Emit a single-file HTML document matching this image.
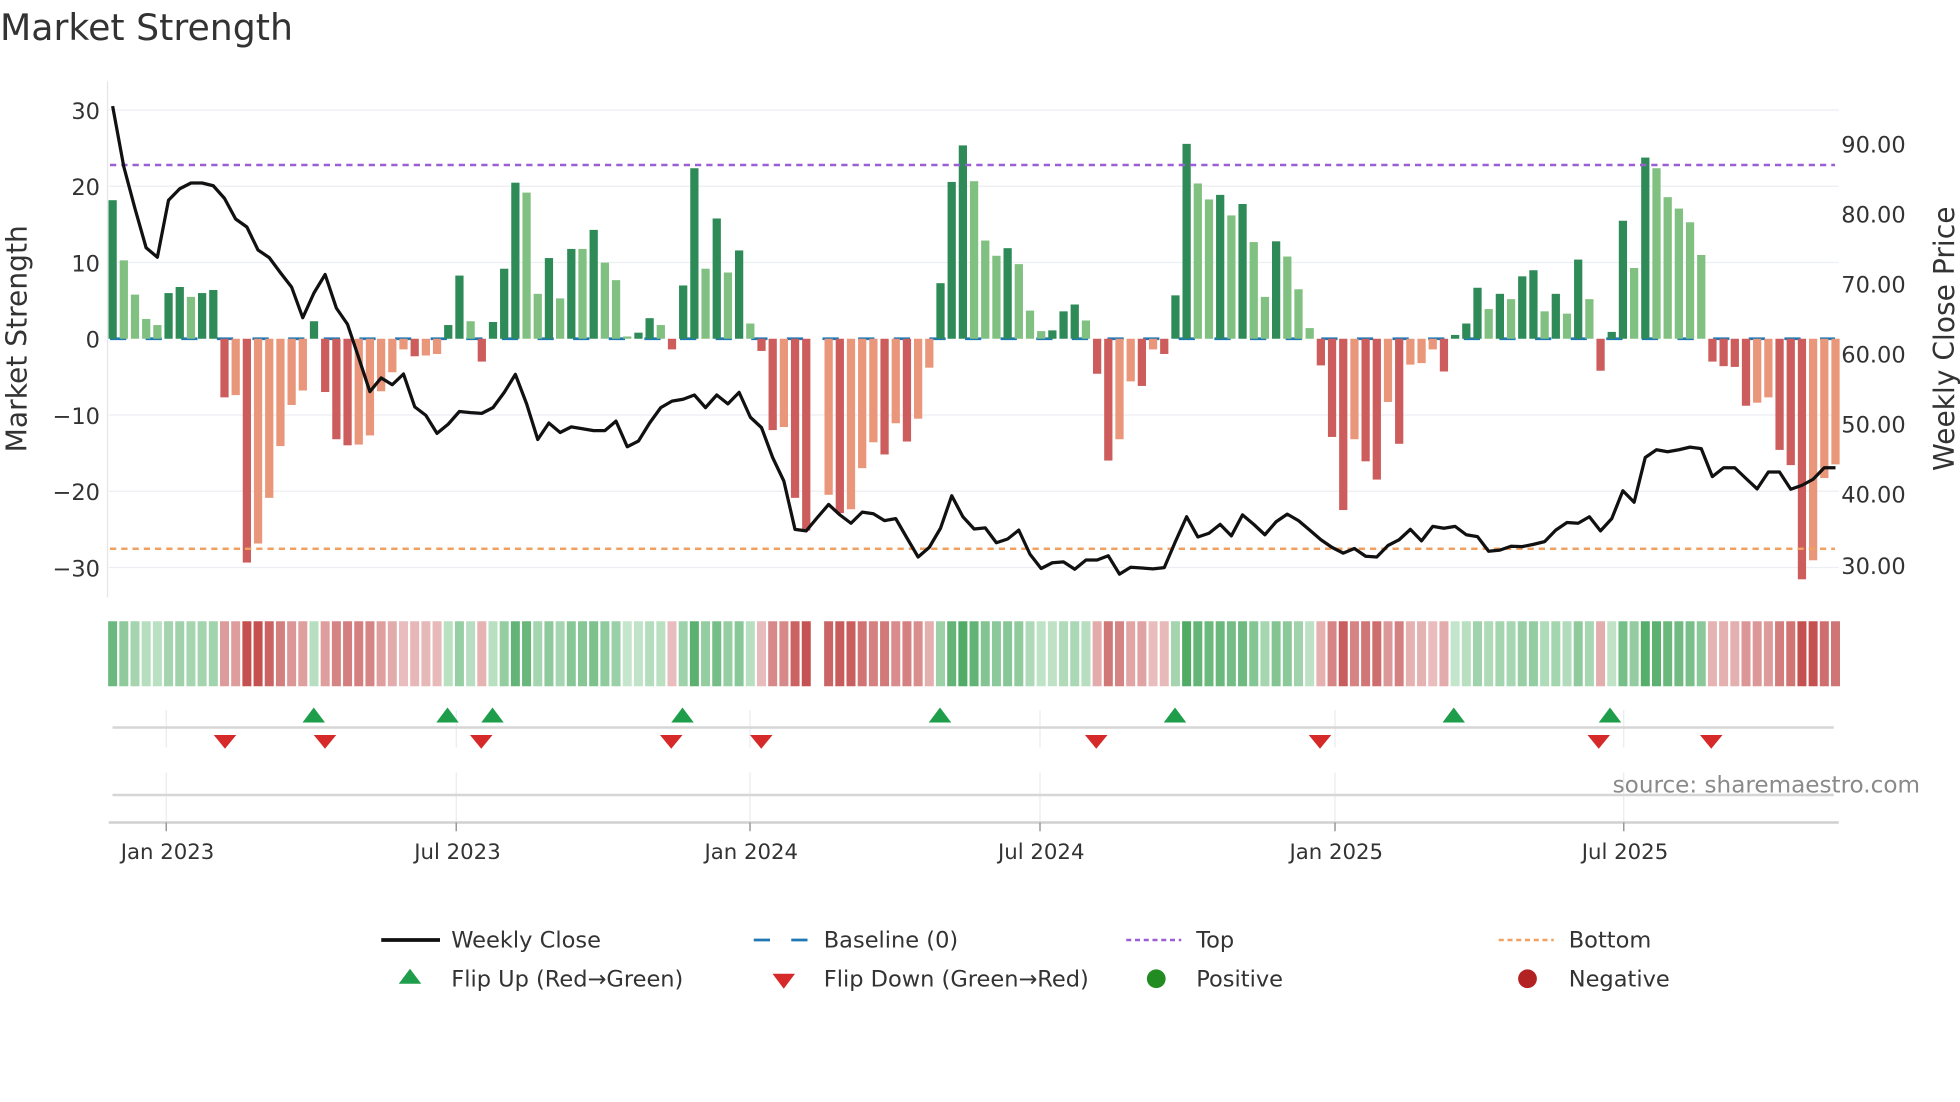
<!DOCTYPE html>
<html><head><meta charset="utf-8"><style>
html,body{margin:0;padding:0;background:#fff;width:1960px;height:1102px;overflow:hidden}
svg{display:block}
text{font-family:"DejaVu Sans","Liberation Sans",sans-serif;fill:#333}
</style></head><body>
<svg id="s" width="1960" height="1102" viewBox="0 0 1568 881.6" xmlns="http://www.w3.org/2000/svg">
<text x="0" y="32" font-size="29">Market Strength</text>
<g stroke="#eceef2" stroke-width="1">
<line x1="87" x2="1471" y1="88" y2="88"/><line x1="87" x2="1471" y1="149" y2="149"/><line x1="87" x2="1471" y1="210" y2="210"/>
<line x1="87" x2="1471" y1="332" y2="332"/><line x1="87" x2="1471" y1="393" y2="393"/><line x1="87" x2="1471" y1="454" y2="454"/>
</g>
<line x1="86" x2="86" y1="65" y2="478" stroke="#e4e6ea"/>
<g font-size="18" text-anchor="end">
<text x="80" y="95">30</text><text x="80" y="156">20</text><text x="80" y="217">10</text><text x="80" y="278">0</text>
<text x="80" y="339">−10</text><text x="80" y="400">−20</text><text x="80" y="461">−30</text>
</g>
<g font-size="18">
<text x="1473" y="122">90.00</text><text x="1473" y="178">80.00</text><text x="1473" y="234">70.00</text><text x="1473" y="290">60.00</text>
<text x="1473" y="346">50.00</text><text x="1473" y="402">40.00</text><text x="1473" y="459">30.00</text>
</g>
<text font-size="22.5" transform="translate(21,271) rotate(-90)" text-anchor="middle">Market Strength</text>
<text font-size="22.5" transform="translate(1563,271) rotate(-90)" text-anchor="middle">Weekly Close Price</text>
<line x1="88" x2="1468" y1="271" y2="271" stroke="#1f77b4" stroke-width="2.2" stroke-dasharray="13 15.5"/>
<g id="bars"></g>
<line x1="88" x2="1468" y1="132" y2="132" stroke="#9a5fd6" stroke-width="2" stroke-dasharray="5 4"/>
<line x1="88" x2="1468" y1="439" y2="439" stroke="#f0a060" stroke-width="2" stroke-dasharray="5 4"/>
<polyline id="price" fill="none" stroke="#111" stroke-width="2.6" stroke-linejoin="round"/>
<g id="heat"></g>
<g stroke="#e8ecef" stroke-width="1">
<line x1="133" x2="133" y1="568" y2="598"/><line x1="365" x2="365" y1="568" y2="598"/><line x1="600" x2="600" y1="568" y2="598"/>
<line x1="832" x2="832" y1="568" y2="598"/><line x1="1068" x2="1068" y1="568" y2="598"/><line x1="1299" x2="1299" y1="568" y2="598"/>
<line x1="133" x2="133" y1="618" y2="658"/><line x1="365" x2="365" y1="618" y2="658"/><line x1="600" x2="600" y1="618" y2="658"/>
<line x1="832" x2="832" y1="618" y2="658"/><line x1="1068" x2="1068" y1="618" y2="658"/><line x1="1299" x2="1299" y1="618" y2="658"/>
</g>
<line x1="90" x2="1467" y1="582" y2="582" stroke="#d6d6d6" stroke-width="2"/>
<line x1="90" x2="1467" y1="636" y2="636" stroke="#d6d6d6" stroke-width="2"/>
<line x1="87" x2="1471" y1="658" y2="658" stroke="#d0d0d0" stroke-width="2"/>
<g stroke="#999" stroke-width="1.2">
<line x1="133" x2="133" y1="658" y2="665"/><line x1="365" x2="365" y1="658" y2="665"/><line x1="600" x2="600" y1="658" y2="665"/>
<line x1="832" x2="832" y1="658" y2="665"/><line x1="1068" x2="1068" y1="658" y2="665"/><line x1="1299" x2="1299" y1="658" y2="665"/>
</g>
<g id="flips"></g>
<text x="1536" y="634" font-size="18.5" text-anchor="end" style="fill:#8a8a8a">source: sharemaestro.com</text>
<g font-size="17" text-anchor="middle">
<text x="134" y="687">Jan 2023</text><text x="366" y="687">Jul 2023</text><text x="601" y="687">Jan 2024</text>
<text x="833" y="687">Jul 2024</text><text x="1069" y="687">Jan 2025</text><text x="1300" y="687">Jul 2025</text>
</g>
<g font-size="18">
<line x1="305" x2="352" y1="752" y2="752" stroke="#111" stroke-width="3"/>
<text x="361" y="758">Weekly Close</text>
<line x1="603" x2="648" y1="752" y2="752" stroke="#1f77b4" stroke-width="2.2" stroke-dasharray="13 17"/>
<text x="659" y="758">Baseline (0)</text>
<line x1="901" x2="945" y1="752" y2="752" stroke="#9a5fd6" stroke-width="2" stroke-dasharray="4 3"/>
<text x="957" y="758">Top</text>
<line x1="1199" x2="1243" y1="752" y2="752" stroke="#f0a060" stroke-width="2" stroke-dasharray="4 3"/>
<text x="1255" y="758">Bottom</text>
<polygon points="328,775 319,787 337,787" fill="#1e9e4a"/>
<text x="361" y="789">Flip Up (Red→Green)</text>
<polygon points="618,779 636,779 627,791" fill="#d62a2a"/>
<text x="659" y="789">Flip Down (Green→Red)</text>
<circle cx="925" cy="783" r="7.5" fill="#228b22"/>
<text x="957" y="789">Positive</text>
<circle cx="1222" cy="783" r="7.5" fill="#b22222"/>
<text x="1255" y="789">Negative</text>
</g>
</svg>
<script>
var V=[[18.2,1],[10.3,0],[5.8,0],[2.6,0],[1.8,0],[6,1],[6.8,1],[5.5,0],[6,1],[6.4,1],[-7.7,1],[-7.4,0],[-29.4,1],[-26.9,0],[-20.9,0],[-14.1,0],[-8.7,0],[-6.8,0],[2.3,1],[-7,1],[-13.2,1],[-14,1],[-13.9,0],[-12.7,0],[-6.9,0],[-4.4,0],[-1.4,0],[-2.3,1],[-2.2,0],[-2,0],[1.8,1],[8.3,1],[2.3,0],[-3,1],[2.2,1],[9.2,1],[20.5,1],[19.2,0],[5.9,0],[10.6,1],[5.3,0],[11.8,1],[11.8,0],[14.3,1],[10,0],[7.7,0],[0.3,0],[0.8,1],[2.7,1],[1.8,0],[-1.4,1],[7,1],[22.4,1],[9.2,0],[15.8,1],
[8.7,0],[11.6,1],[2,0],[-1.6,1],[-12,1],[-11.6,0],[-20.9,1],[-25.2,1],null,[-20.5,0],[-22.9,1],[-22.4,0],[-17,0],[-13.6,0],[-15.2,1],[-11.1,0],[-13.5,1],[-10.5,0],[-3.8,0],[7.3,1],[20.6,1],[25.4,1],[20.7,0],[12.9,0],[10.9,0],[11.9,1],[9.8,0],[3.7,0],[1,0],[1.1,1],[3.6,1],[4.5,1],[2.4,0],[-4.6,1],[-16,1],[-13.2,0],[-5.6,0],[-6.2,1],[-1.4,0],[-2,1],[5.7,1],[25.6,1],[20.4,0],[18.3,0],[18.9,1],[16.2,0],[17.7,1],[12.7,0],[5.5,0],[12.8,1],[10.8,0],[6.5,0],[1.4,0],[-3.5,1],
[-12.9,1],[-22.5,1],[-13.2,0],[-16.1,1],[-18.5,1],[-8.3,0],[-13.8,1],[-3.4,0],[-3.2,0],[-1.4,0],[-4.3,1],[0.5,1],[2,1],[6.7,1],[3.9,0],[5.9,1],[5.2,0],[8.2,1],[9,1],[3.6,0],[5.9,1],[3.3,0],[10.4,1],[5.2,0],[-4.2,1],[0.9,1],[15.5,1],[9.3,0],[23.8,1],[22.4,0],[18.6,0],[17.1,0],[15.3,0],[11,0],[-3,1],[-3.6,1],[-3.7,1],[-8.8,1],[-8.4,0],[-7.7,0],[-14.6,1],[-16.6,1],[-31.6,1],[-29.1,0],[-18.3,0],[-16.5,0]];
var P=[42,200,310,412,437,288,258,243,243,250,283,337,358,418,438,477,515,595,530,482,570,612,700,788,752,770,742,828,850,897,873,840,843,845,830,790,743,820,913,870,895,880,885,890,890,865,932,917,870,830,813,808,797,830,797,
820,790,855,882,960,1022,1148,1152,1117,1083,1110,1132,1103,1107,1125,1120,1170,1220,1195,1145,1060,1115,1147,1144,1183,1173,1150,1213,1250,1235,1233,1252,1228,1228,1217,1265,1247,1249,1251,1248,1180,1115,1168,1158,1135,1165,1110,1135,1162,1128,1108,1125,1150,1175,
1195,1210,1198,1218,1220,1190,1175,1148,1178,1140,1145,1140,1162,1167,1205,1202,1192,1193,1187,1180,1150,1130,1132,1115,1152,1120,1047,1077,960,940,945,940,933,937,1010,987,987,1015,1042,998,998,1043,1033,1017,987,987];
var ns="http://www.w3.org/2000/svg";
function el(p,t,a){var e=document.createElementNS(ns,t);for(var k in a)e.setAttribute(k,a[k]);p.appendChild(e);return e;}
var bars=document.getElementById('bars'),heat=document.getElementById('heat');
function mix(a,b,t){return 'rgb('+[0,1,2].map(function(i){return Math.round(a[i]+(b[i]-a[i])*t)}).join(',')+')';}
for(var i=0;i<V.length;i++){
 var x=90.1+i*8.95,d=V[i];
 if(!d)continue;
 var v=d[0],y0=271,y1=271-v*6.09;
 var col=v>=0?(d[1]?'#2e8b57':'#80c080'):(d[1]?'#cd5c5c':'#e9967a');
 el(bars,'rect',{x:x-3.3,y:Math.min(y0,y1),width:6.6,height:Math.max(Math.abs(y1-y0),0.8),fill:col});
 var t=Math.min(Math.abs(v)/26,1);t=0.15+0.85*Math.pow(t,0.8);
 var hc=v>=0?mix([222,242,226],[78,170,100],t):mix([244,222,222],[196,80,80],t);
 el(heat,'rect',{x:x-3.6,y:497,width:7.2,height:52,fill:hc});
}
var pts=[];for(var i=0;i<P.length;i++){pts.push((90.1+i*8.95).toFixed(1)+','+(72+P[i]*0.3062).toFixed(1));}
document.getElementById('price').setAttribute('points',pts.join(' '));
var f=document.getElementById('flips');
[251,358,394,546,752,940,1163,1288].forEach(function(x){el(f,'polygon',{points:(x)+',566 '+(x-9)+',578 '+(x+9)+',578',fill:'#1e9e4a'});});
[180,260,385,537,609,877,1056,1279,1369].forEach(function(x){el(f,'polygon',{points:(x-9)+',588 '+(x+9)+',588 '+x+',599',fill:'#d62a2a'});});
</script>
</body></html>
